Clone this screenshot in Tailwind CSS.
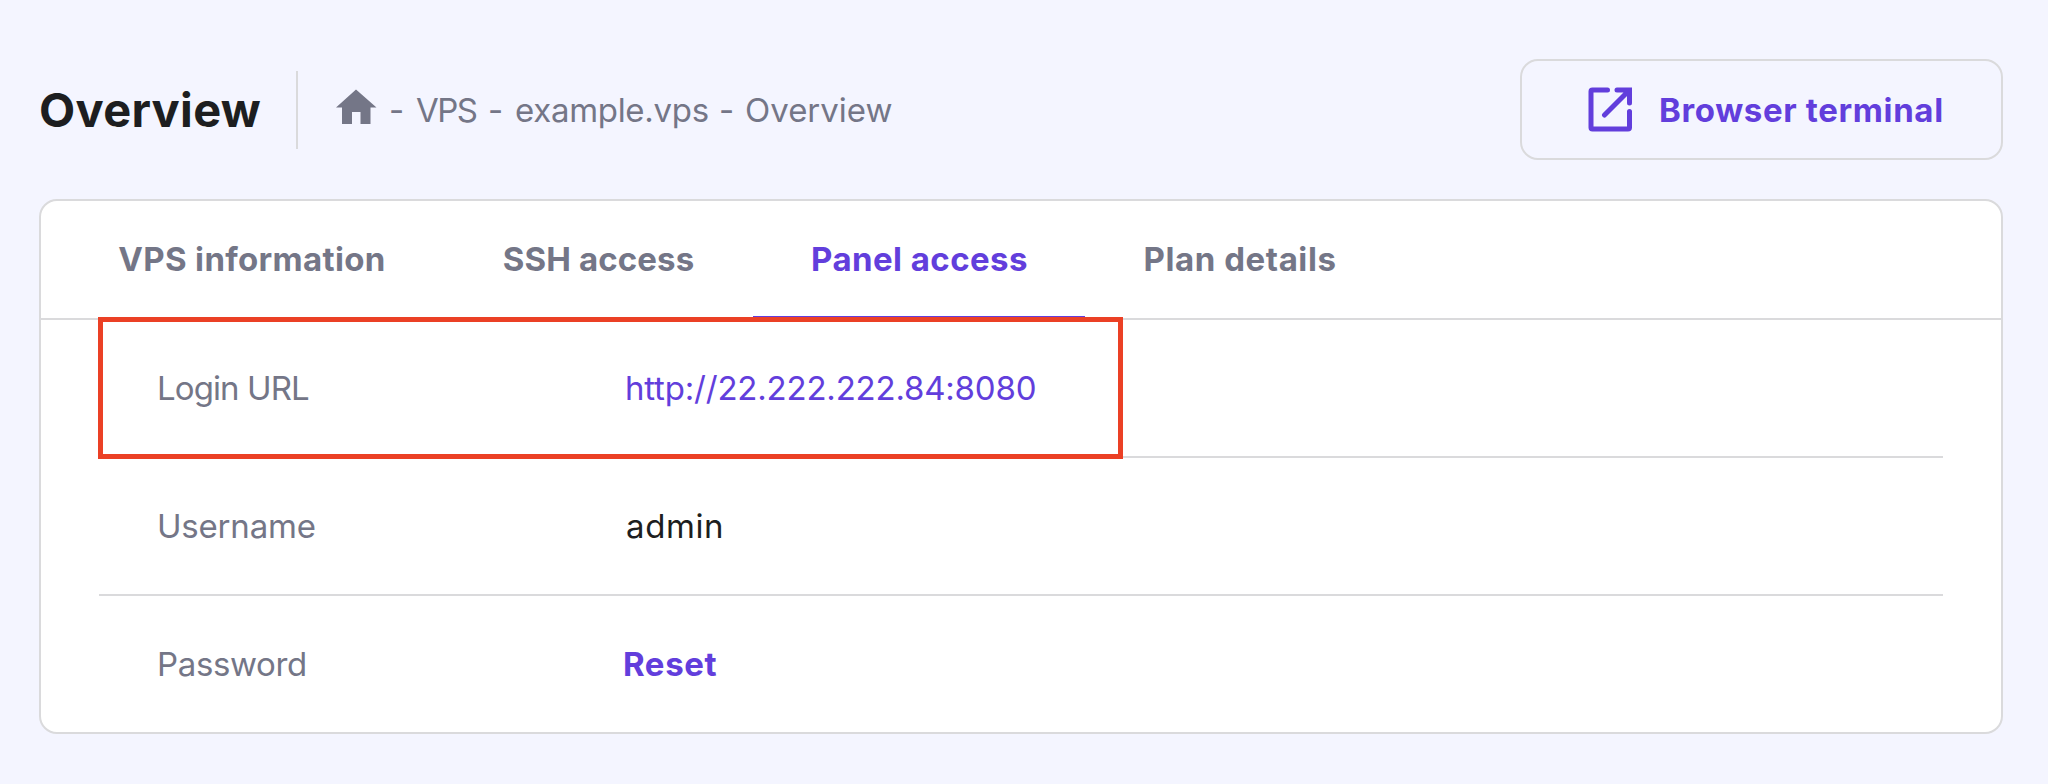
<!DOCTYPE html>
<html lang="en">
<head>
    <meta charset="UTF-8">
    <meta name="viewport" content="width=device-width, initial-scale=1.0">
    <title>VPS Overview</title>
    <script src="https://cdn.jsdelivr.net/npm/@tailwindcss/browser@4"></script>
</head>
<body class="min-h-screen bg-[#f4f5ff] px-[39px] pt-[59px] pr-[45px] font-['Inter',sans-serif] text-[33px] leading-10 text-[#1d1e20]">
    <!-- Header -->
    <header class="flex h-[101px] items-center justify-between">
        <div class="flex items-center">
            <h1 class="w-[257px] pb-px text-[47px] leading-none font-bold tracking-[0.3px] whitespace-nowrap">Overview</h1>
            <div class="h-[78px] w-[2px] bg-[#dadadc]"></div>
            <nav class="ml-[38px] flex items-center tracking-[-0.2px] whitespace-nowrap text-[#747687]">
                <svg class="mr-[12px] mb-[5px] h-[36px] w-[41px]" viewBox="0 0 41 36" fill="currentColor">
                    <path d="M20 0.500L0 18.5H6V35H16V23H24.5V35H34.5V18.5H40.5Z"/>
                </svg>
                <span class="w-[27px]">-</span>
                <span class="w-[72px] tracking-[-1.6px]">VPS</span>
                <span class="w-[27px]">-</span>
                <span class="w-[204px] tracking-[-0.3px]">example.vps</span>
                <span class="w-[26px]">-</span>
                <span class="tracking-normal">Overview</span>
            </nav>
        </div>
        <button class="flex h-[101px] w-[483px] items-center rounded-[18px] border-2 border-[#dadadc] pl-[66px] font-bold whitespace-nowrap text-[#623edc]">
            <svg class="mr-[26px] h-[45px] w-[45px]" viewBox="0 0 45 45" fill="none" stroke="currentColor" stroke-width="5" stroke-linecap="round">
                <path d="M19.5 3H4.5Q3 3 3 4.5V40.5Q3 42 4.500 42H40Q41.5 42 41.5 40.5V24.5" stroke-linejoin="round"/>
                <path d="M29 3H41.5V16M41 3.5L16.5 28"/>
            </svg>
            <span class="tracking-[0.64px]">Browser terminal</span>
        </button>
    </header>

    <!-- Card -->
    <main class="relative mt-[39px] h-[535px] rounded-[18px] border-2 border-[#dadadc] bg-white">
        <div class="flex h-[119px] border-b-2 border-[#dadadc] pl-[19px] font-bold whitespace-nowrap text-[#747687]">
            <a class="flex w-[384px] items-center justify-center pb-[2px] tracking-[0.33px]">VPS information</a>
            <a class="flex w-[309px] items-center justify-center pb-[2px] tracking-[0.13px]">SSH access</a>
            <a class="-mb-[2px] flex w-[332px] items-center justify-center border-b-4 border-[#623edc] pl-px tracking-[0.43px] text-[#623edc]">Panel access</a>
            <a class="flex w-[309px] items-center justify-center pb-[2px] pl-px tracking-[0.57px]">Plan details</a>
        </div>
        <div class="mx-[58px]">
            <div class="flex h-[138px] items-center border-b-2 border-[#dadadc]">
                <span class="w-[526px] pl-[58px] tracking-[-0.9px] text-[#747687]">Login URL</span>
                <a class="tracking-[-0.2px] text-[#623edc]">http://22.222.222.84:8080</a>
            </div>
            <div class="flex h-[138px] items-center border-b-2 border-[#dadadc]">
                <span class="w-[527px] pl-[58px] tracking-[-0.2px] text-[#747687]">Username</span>
                <span class="tracking-[0.6px]">admin</span>
            </div>
            <div class="flex h-[136px] items-center">
                <span class="w-[524px] pl-[58px] tracking-[-0.35px] text-[#747687]">Password</span>
                <a class="font-bold tracking-[0.6px] text-[#623edc]">Reset</a>
            </div>
        </div>
        <!-- Highlight around the login URL -->
        <div class="absolute top-[116px] left-[57px] h-[142px] w-[1025px] border-[5px] border-[#eb4025]"></div>
    </main>
</body>
</html>
